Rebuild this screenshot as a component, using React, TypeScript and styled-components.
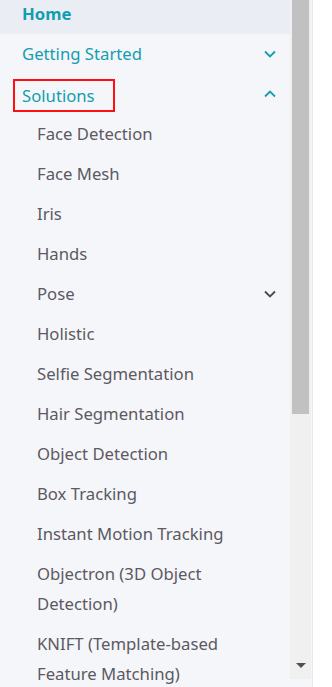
import React from 'react'
import styled, { createGlobalStyle } from 'styled-components'

const GlobalStyle = createGlobalStyle`
  html, body {
    margin: 0;
    padding: 0;
    background: #fff;
  }
  body {
    font-family: "Noto Sans", "Open Sans", sans-serif;
  }
`

const Page = styled.div`
  display: flex;
  width: 332px;
  height: 687px;
  overflow: hidden;
  background: #fff;
`

const SideBar = styled.div`
  display: flex;
  width: 312px;
  height: 687px;
  background: #f5f6fa;
  border-right: 1px solid #e8e8ec;
`

const Nav = styled.ul`
  list-style: none;
  margin: -6px 0 0;
  padding: 0;
  width: 290px;
  overflow: hidden;
`

const Item = styled.li<{ $active?: boolean }>`
  display: flex;
  align-items: flex-start;
  justify-content: space-between;
  height: 30px;
  padding: 5px 5px 5px 22px;
  background: ${(p) => (p.$active ? '#ebedf5' : 'transparent')};
`

const SubItem = styled.li`
  display: flex;
  align-items: flex-start;
  justify-content: space-between;
  padding: 5px 5px 5px 37px;
`

const TopLink = styled.span<{ $bold?: boolean }>`
  font-size: 16.7px;
  line-height: 30px;
  color: #129eaf;
  font-weight: ${(p) => (p.$bold ? 700 : 400)};
`

const Marked = styled(TopLink)`
  display: inline-block;
  line-height: 29px;
  margin-left: -9px;
  padding: 0 18px 0 7px;
  border: 2px solid #ff1010;
`

const SubLink = styled.span`
  font-size: 16.7px;
  line-height: 30px;
  color: #5c5962;
  max-width: 215px;
`

const Expander = styled.span<{ $dark?: boolean }>`
  display: flex;
  align-items: center;
  justify-content: center;
  width: 30px;
  height: 30px;
  flex-shrink: 0;
  color: ${(p) => (p.$dark ? '#4b4950' : '#129eaf')};
`

const ScrollTrack = styled.div`
  display: flex;
  flex-direction: column;
  align-items: center;
  width: 21px;
  height: 679px;
  background: #f0f0f0;
`

const Thumb = styled.div`
  width: 17px;
  height: 414px;
  background: #c1c1c1;
`

const ArrowDown = styled.div`
  margin-top: auto;
  margin-bottom: 11px;
  width: 0;
  height: 0;
  border-left: 5px solid transparent;
  border-right: 5px solid transparent;
  border-top: 5px solid #505050;
`

const Chevron = ({ up }: { up?: boolean }) => (
  <svg width="12" height="8" viewBox="0 0 12 8">
    <polyline
      points={up ? '1,6.5 6,1.5 11,6.5' : '1,1.5 6,6.5 11,1.5'}
      fill="none"
      stroke="currentColor"
      strokeWidth="1.8"
    />
  </svg>
)

const solutions: { name: string; more?: boolean }[] = [
  { name: 'Face Detection' },
  { name: 'Face Mesh' },
  { name: 'Iris' },
  { name: 'Hands' },
  { name: 'Pose', more: true },
  { name: 'Holistic' },
  { name: 'Selfie Segmentation' },
  { name: 'Hair Segmentation' },
  { name: 'Object Detection' },
  { name: 'Box Tracking' },
  { name: 'Instant Motion Tracking' },
  { name: 'Objectron (3D Object Detection)' },
  { name: 'KNIFT (Template-based Feature Matching)' },
]

export default function App() {
  return (
    <>
      <GlobalStyle />
      <Page>
        <SideBar>
          <Nav>
            <Item $active>
              <TopLink $bold>Home</TopLink>
            </Item>
            <Item>
              <TopLink>Getting Started</TopLink>
              <Expander>
                <Chevron />
              </Expander>
            </Item>
            <Item>
              <Marked>Solutions</Marked>
              <Expander>
                <Chevron up />
              </Expander>
            </Item>
            {solutions.map((s) => (
              <SubItem key={s.name}>
                <SubLink>{s.name}</SubLink>
                {s.more && (
                  <Expander $dark>
                    <Chevron />
                  </Expander>
                )}
              </SubItem>
            ))}
          </Nav>
          <ScrollTrack>
            <Thumb />
            <ArrowDown />
          </ScrollTrack>
        </SideBar>
      </Page>
    </>
  )
}
